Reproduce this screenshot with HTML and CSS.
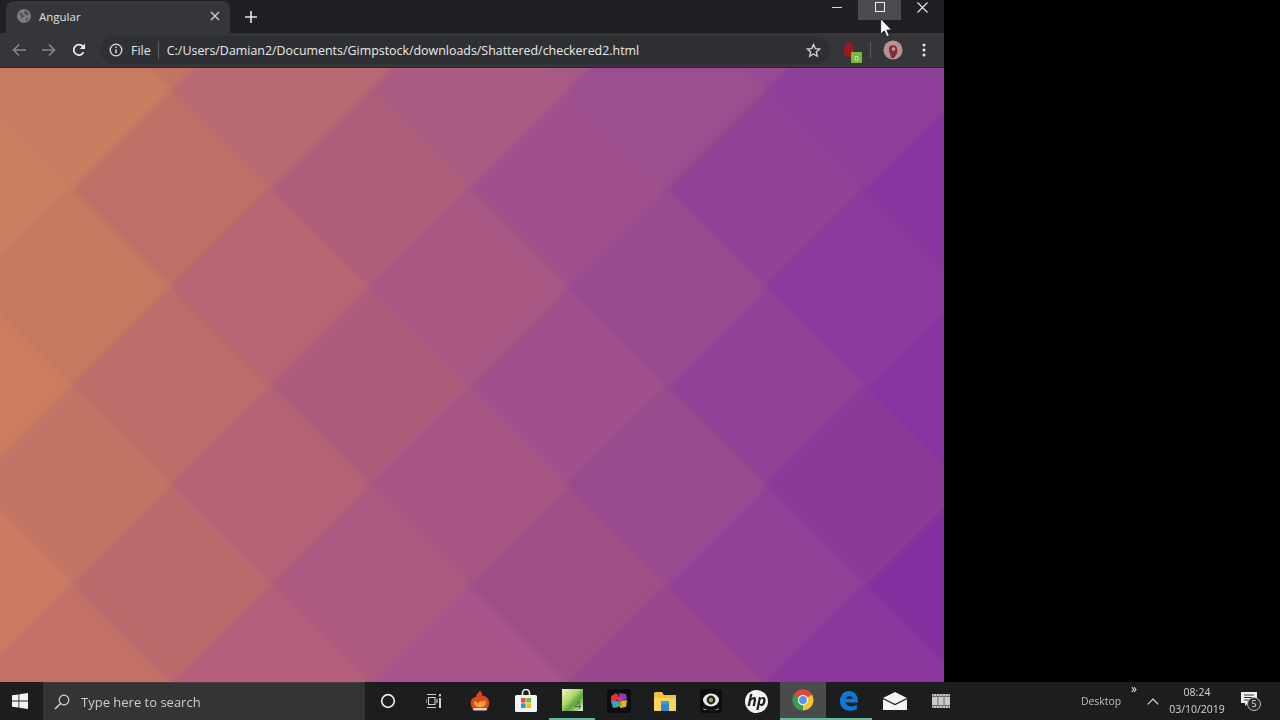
FILE: index.html
```html
<!DOCTYPE html>
<html lang="en">
<head>
    <meta charset="UTF-8">
    <meta name="viewport" content="width=device-width, initial-scale=1.0">
    <title>Angular</title>
    <link rel="stylesheet" href="styles.css">
</head>
<body>

    <div class="screen">
        <div class="window">
            <!-- tab strip -->
            <div class="tabstrip">
                <div class="tab">
                    <svg class="favicon" width="16" height="16" viewBox="0 0 16 16"><circle cx="8" cy="8" r="7" fill="#7b7d80"/><path d="M3 4l4 2 1 3-3 1zM9 2l4 3-2 3-3-2zM10 10l3 0-3 4z" fill="#55565a"/></svg>
                    <span class="tab-title">Angular</span>
                    <svg class="tab-close" width="10" height="10" viewBox="0 0 10 10"><path d="M1 1l8 8M9 1l-8 8" stroke="#c8cacc" stroke-width="1.5"/></svg>
                </div>
                <svg class="newtab" width="12" height="12" viewBox="0 0 12 12"><path d="M6 0v12M0 6h12" stroke="#e4e6e8" stroke-width="1.6"/></svg>
                <div class="winbtns">
                    <div class="winbtn"><svg width="10" height="10" viewBox="0 0 10 10"><path d="M0 5.5h10" stroke="#d8d8d8" stroke-width="1"/></svg></div>
                    <div class="winbtn winbtn-hover"><svg width="10" height="10" viewBox="0 0 10 10"><rect x=".5" y=".5" width="9" height="9" fill="none" stroke="#eee" stroke-width="1"/></svg></div>
                    <div class="winbtn"><svg width="11" height="11" viewBox="0 0 11 11"><path d="M.5.5l10 10M10.5.5l-10 10" stroke="#eee" stroke-width="1.1"/></svg></div>
                </div>
            </div>

            <!-- toolbar -->
            <div class="toolbar">
                <svg class="nav-icon" width="14" height="14" viewBox="0 0 14 14"><path d="M14 7H2M7 1.5L1.500 7 7 12.500" fill="none" stroke="#85888b" stroke-width="1.6"/></svg>
                <svg class="nav-icon" width="14" height="14" viewBox="0 0 14 14"><path d="M0 7h12M7 1.500L12.500 7 7 12.500" fill="none" stroke="#85888b" stroke-width="1.6"/></svg>
                <svg class="nav-icon" width="14" height="14" viewBox="0 0 14 14"><path d="M11.6 9.200A5.200 5.200 0 1 1 11 3.600" fill="none" stroke="#eceef0" stroke-width="1.700"/><path d="M13 .6V6H7.800z" fill="#eceef0"/></svg>
                <div class="omnibox">
                    <svg class="info" width="14" height="14" viewBox="0 0 14 14"><circle cx="7" cy="7" r="5.800" fill="none" stroke="#dfe1e3" stroke-width="1.300"/><path d="M7 6.200v4M7 3.600v1.500" stroke="#dfe1e3" stroke-width="1.400"/></svg>
                    <span class="scheme">File</span>
                    <span class="divider"></span>
                    <span class="url">C:/Users/Damian2/Documents/Gimpstock/downloads/Shattered/checkered2.html</span>
                    <svg class="star" width="15" height="15" viewBox="0 0 15 15"><path d="M7.500 1.600l1.800 4 4.300.4-3.300 2.900 1 4.300-3.800-2.300-3.800 2.300 1-4.300L1.400 6l4.300-.4z" fill="none" stroke="#d6d8da" stroke-width="1.300"/></svg>
                </div>
                <div class="extension">
                    <svg width="22" height="26" viewBox="0 0 22 26"><path d="M8 4c3 0 4 3 4 5 1 2 2 5 0 8-2 3-6 3-8 0-2-3-1-6 0-8 0-2 1-5 4-5z" fill="#9c1822"/><rect x="10" y="14" width="11" height="11" rx="1" fill="#7ab83e"/></svg>
                    <span class="badge">0</span>
                </div>
                <span class="divider divider-ext"></span>
                <svg class="avatar" width="20" height="20" viewBox="0 0 20 20"><circle cx="10" cy="10" r="9.500" fill="#bb9293"/><path d="M6 8c0-3 7-4 8 0 1 3 0 6-1 7l-2 3H8l-1-4c-1-2-1-4-1-6z" fill="#80303a"/><circle cx="10.500" cy="9" r="1.800" fill="#c9a09c"/></svg>
                <svg class="menu" width="4" height="14" viewBox="0 0 4 14"><circle cx="2" cy="2" r="1.500" fill="#e6e8ea"/><circle cx="2" cy="7" r="1.500" fill="#e6e8ea"/><circle cx="2" cy="12" r="1.500" fill="#e6e8ea"/></svg>
            </div>

            <!-- page: checkered diamonds -->
            <svg class="page" viewBox="0 68 944 614" preserveAspectRatio="none">
                <defs><path id="d" d="M0-100L100 0 0 100-100 0z"/></defs>
                <g class="cells">
                    <rect x="-20" y="40" width="990" height="660" fill="#a85a80"/>
                    <use href="#d" x="-26" y="-8" fill="#cc8260"/>
                    <use href="#d" x="172" y="-8" fill="#c47562"/>
                    <use href="#d" x="370" y="-8" fill="#b86a74"/>
                    <use href="#d" x="568" y="-8" fill="#a85a86"/>
                    <use href="#d" x="766" y="-8" fill="#9a4a94"/>
                    <use href="#d" x="964" y="-8" fill="#8e3e9c"/>

                    <use href="#d" x="72" y="91" fill="#c87c60"/>
                    <use href="#d" x="270" y="91" fill="#ba6a72"/>
                    <use href="#d" x="468" y="91" fill="#ab5c82"/>
                    <use href="#d" x="666" y="91" fill="#9c4e90"/>
                    <use href="#d" x="864" y="91" fill="#8f3f9a"/>

                    <use href="#d" x="-26" y="190" fill="#cc7f60"/>
                    <use href="#d" x="172" y="190" fill="#bf6e68"/>
                    <use href="#d" x="370" y="190" fill="#af5e7a"/>
                    <use href="#d" x="568" y="190" fill="#a0508a"/>
                    <use href="#d" x="766" y="190" fill="#924296"/>
                    <use href="#d" x="964" y="190" fill="#8634a0"/>

                    <use href="#d" x="72" y="287" fill="#c67860"/>
                    <use href="#d" x="270" y="287" fill="#b76572"/>
                    <use href="#d" x="468" y="287" fill="#a85882"/>
                    <use href="#d" x="666" y="287" fill="#994a90"/>
                    <use href="#d" x="864" y="287" fill="#8c3a9c"/>

                    <use href="#d" x="-26" y="388" fill="#cc7d60"/>
                    <use href="#d" x="172" y="388" fill="#bd6c6a"/>
                    <use href="#d" x="370" y="388" fill="#ae5c7c"/>
                    <use href="#d" x="568" y="388" fill="#a0508a"/>
                    <use href="#d" x="766" y="388" fill="#924296"/>
                    <use href="#d" x="964" y="388" fill="#8634a0"/>

                    <use href="#d" x="72" y="485" fill="#c47464"/>
                    <use href="#d" x="270" y="485" fill="#b66276"/>
                    <use href="#d" x="468" y="485" fill="#a75684"/>
                    <use href="#d" x="666" y="485" fill="#984a8e"/>
                    <use href="#d" x="864" y="485" fill="#8b3a9a"/>

                    <use href="#d" x="-26" y="586" fill="#ca7a62"/>
                    <use href="#d" x="172" y="586" fill="#bd6a6c"/>
                    <use href="#d" x="370" y="586" fill="#ae5a80"/>
                    <use href="#d" x="568" y="586" fill="#a04e88"/>
                    <use href="#d" x="766" y="586" fill="#924096"/>
                    <use href="#d" x="964" y="586" fill="#8530a0"/>

                    <use href="#d" x="72" y="684" fill="#c27068"/>
                    <use href="#d" x="270" y="684" fill="#b45e7a"/>
                    <use href="#d" x="468" y="684" fill="#a6548a"/>
                    <use href="#d" x="666" y="684" fill="#98468e"/>
                    <use href="#d" x="864" y="684" fill="#8a389c"/>
                </g>
            </svg>
        </div>
        <div class="blackout"></div>
    </div>

    <!-- taskbar -->
    <div class="taskbar">
        <div class="start">
            <svg width="16" height="16" viewBox="0 0 16 16"><path d="M0 2.300l6.500-.9v6.200H0zM7.300 1.300L16 0v7.600H7.300zM0 8.400h6.500v6.200L0 13.700zM7.300 8.400H16V16l-8.700-1.300z" fill="#f4f4f4"/></svg>
        </div>
        <div class="search">
            <svg width="16" height="16" viewBox="0 0 16 16"><circle cx="10" cy="6" r="4.800" fill="none" stroke="#d8d8d8" stroke-width="1.200"/><path d="M6.500 9.500L1 15" stroke="#d8d8d8" stroke-width="1.400"/></svg>
            <span class="search-text">Type here to search</span>
        </div>
        <div class="apps">
            <div class="app"><svg width="16" height="16" viewBox="0 0 16 16"><circle cx="8" cy="8" r="6.300" fill="none" stroke="#e8e8e8" stroke-width="1.700"/></svg></div>
            <div class="app"><svg width="16" height="14" viewBox="0 0 16 14"><path d="M1 .5h9M1 13.500h9M2.500 3.500h6.500v7h-6.500zM0 5v4M11 5v4" fill="none" stroke="#cfcfcf" stroke-width="1.100"/><rect x="13" y="0" width="2" height="2.400" fill="#cfcfcf"/><rect x="13" y="4" width="2" height="10" fill="#cfcfcf"/></svg></div>
            <div class="app"><svg width="20" height="22" viewBox="0 0 20 22"><path d="M10 0c1 3 3 3 2 6 3-1 6 2 7 5 1 4-1 8-4 9H5c-3-1-5-5-4-9 1-3 3-4 5-4C6 4 9 3 10 0z" fill="#d9481c"/><path d="M4 12c2-2 3 0 4 2 1-3 3-4 4-2 1-1 3-2 4 0 0 3-2 5-6 5s-6-2-6-5z" fill="#f3a23a"/><rect x="3" y="18" width="14" height="2.400" rx="1" fill="#e6cfc0"/></svg></div>
            <div class="app"><svg width="22" height="24" viewBox="0 0 22 24"><path d="M7.500 7V4a3.500 3.500 0 0 1 7 0v3" fill="none" stroke="#f2f2f2" stroke-width="1.600"/><rect x="0" y="6" width="22" height="17" rx="1.500" fill="#f4f4f4"/><rect x="6" y="9" width="4.600" height="4.600" fill="#e8532a"/><rect x="11.400" y="9" width="4.600" height="4.600" fill="#78b82a"/><rect x="6" y="14.400" width="4.600" height="4.600" fill="#1f9fe0"/><rect x="11.400" y="14.400" width="4.600" height="4.600" fill="#f7b916"/></svg></div>
            <div class="app app-open"><div class="sheet"><span class="sheet-num">4</span></div></div>
            <div class="app"><svg width="24" height="24" viewBox="0 0 24 24"><rect width="24" height="24" rx="3" fill="#0d0d10"/><path d="M4 7l5-3 3 3-3 5-5 0z" fill="#e0352d"/><path d="M12 4l7 1 1 5-7 2z" fill="#8a3bb8"/><path d="M4 12h7l1 6-6 1z" fill="#2f9ed8"/><path d="M12 12l8-1-1 7-6 1z" fill="#e8b21e"/><path d="M9 9l5-2 2 4-4 3z" fill="#d6308a"/><path d="M8 14l6-1 1 3-5 2z" fill="#4cb848"/></svg></div>
            <div class="app"><svg width="22" height="19" viewBox="0 0 22 19"><path d="M0 1.500A1.500 1.500 0 0 1 1.500 0H8l2 3h12v15a1 1 0 0 1-1 1H1a1 1 0 0 1-1-1z" fill="#f0c040"/><rect x="0" y="6" width="22" height="13" rx="1" fill="#fad55c"/><rect x="7" y="9" width="8" height="3" fill="#3a9bdc"/><rect x="7" y="12" width="8" height="7" fill="#2f86c8"/></svg></div>
            <div class="app"><svg width="22" height="24" viewBox="0 0 22 24"><rect width="22" height="24" rx="3" fill="#0e0e0e"/><ellipse cx="11" cy="11" rx="8" ry="6.500" fill="#e8e8e8"/><circle cx="11" cy="11" r="4.400" fill="#222"/><circle cx="11" cy="11" r="2.200" fill="#8fae3a"/><path d="M3 19c5 3 11 3 16 0l-1 2H4z" fill="#a8c040"/></svg></div>
            <div class="app"><div class="hp">hp</div></div>
            <div class="app app-active"><svg width="22" height="22" viewBox="0 0 22 22"><circle cx="11" cy="11" r="10.500" fill="#dd4b3d"/><path d="M11 11L20.100 5.800A10.500 10.500 0 0 1 11 21.500z" fill="#f5c531"/><path d="M11 11L11 21.500A10.500 10.500 0 0 1 1.900 5.800z" fill="#2ea24d"/><path d="M1.900 5.800A10.500 10.500 0 0 1 20.100 5.800H11z" fill="#dd4b3d"/><circle cx="11" cy="11" r="5.200" fill="#f2f2f2"/><circle cx="11" cy="11" r="3.900" fill="#5f8fe8"/></svg></div>
            <div class="app app-open"><svg width="20" height="21" viewBox="0 0 20 21"><path d="M1 11C1 5 5 1 10 1s9 4 9 10v1.500H6.800c.2 3.500 5.500 5.500 11 2.300v4.500c-6.500 3-16.800 1.500-16.800-8.300zM6.800 8.800h7C13.600 5.500 7.500 5.500 6.800 8.800z" fill="#0f78d4" fill-rule="evenodd"/></svg></div>
            <div class="app"><svg width="24" height="18" viewBox="0 0 24 18"><path d="M0 6L12 0l12 6v12H0z" fill="#f4f4f4"/><path d="M0 6.500L12 12.500 24 6.500" fill="none" stroke="#1f2022" stroke-width="1.200"/></svg></div>
            <div class="app"><svg width="18" height="14" viewBox="0 0 18 14"><rect width="18" height="14" fill="#c9c9c9"/><path d="M0 2.500h18M0 11.500h18M6 2.500v9M12 2.500v9" stroke="#6c6c6c" stroke-width="1"/><path d="M1 1h1M4 1h1M7 1h1M10 1h1M13 1h1M16 1h1M1 13h1M4 13h1M7 13h1M10 13h1M13 13h1M16 13h1" stroke="#333" stroke-width="1"/></svg></div>
        </div>
        <div class="tray">
            <span class="tray-desktop">Desktop</span>
            <span class="tray-more">&raquo;</span>
            <svg class="tray-up" width="12" height="7" viewBox="0 0 12 7"><path d="M.7 6.300L6 1l5.300 5.300" fill="none" stroke="#dcdcdc" stroke-width="1.200"/></svg>
            <div class="clock">
                <span>08:24</span>
                <span>03/10/2019</span>
            </div>
            <div class="notify">
                <svg width="16" height="15" viewBox="0 0 16 15"><path d="M0 0h16v11H7l-3 3v-3H0z" fill="#efefef"/><path d="M3 3h10M3 5.500h10M3 8h7" stroke="#333" stroke-width="1"/></svg>
                <span class="notify-count">5</span>
            </div>
        </div>
    </div>

    <!-- mouse pointer -->
    <svg class="cursor" width="12" height="20" viewBox="0 0 12 20"><path d="M.7.7v15.500l3.600-3.400 2.500 6 2.500-1-2.500-5.800h4.800z" fill="#fff" stroke="#111" stroke-width=".8"/></svg>

</body>
</html>
```

FILE: styles.css
```css
* {
box-sizing: border-box;
}

body {
font-family: 'Open Sans', 'Liberation Sans', sans-serif;
background-color: #000;
margin: 0;
padding: 0;
width: 1280px;
height: 720px;
overflow: hidden;
position: relative;
}

.screen {
display: flex;
height: 682px;
}

.window {
width: 944px;
display: flex;
flex-direction: column;
}

.blackout {
flex: 1;
background-color: #000;
}

/* tab strip */

.tabstrip {
height: 33px;
background-color: #1f2023;
display: flex;
align-items: flex-start;
padding-left: 6px;
}

.tab {
width: 224px;
height: 32px;
margin-top: 1px;
background-color: #35363a;
border-radius: 8px 8px 0 0;
display: flex;
align-items: center;
padding: 0 10px 2px 10px;
}

.favicon {
flex: none;
}

.tab-title {
margin-left: 7px;
flex: 1;
font-size: 11.5px;
color: #dfe1e4;
}

.newtab {
margin: 11px 0 0 15px;
}

.winbtns {
display: flex;
margin-left: auto;
}

.winbtn {
width: 43px;
height: 20px;
display: flex;
align-items: center;
justify-content: center;
padding-bottom: 6px;
}

.winbtn-hover {
background-color: #4b4c4f;
}

/* toolbar */

.toolbar {
height: 35px;
background-color: #35363a;
border-bottom: 1px solid #26272a;
display: flex;
align-items: center;
padding-left: 12px;
}

.nav-icon {
flex: none;
margin-right: 16px;
}

.omnibox {
width: 730px;
height: 28px;
margin-left: -2px;
background-color: #2f3033;
border-radius: 14px;
display: flex;
align-items: center;
padding-left: 9px;
}

.info {
flex: none;
}

.scheme {
margin-left: 8px;
font-size: 12.5px;
color: #e3e5e8;
}

.divider {
width: 1px;
height: 18px;
background-color: #5c5e61;
margin: 0 8px 0 7px;
}

.url {
font-size: 12.42px;
color: #e8eaed;
white-space: nowrap;
}

.star {
margin-left: auto;
margin-right: 9px;
}

.extension {
position: relative;
width: 22px;
height: 26px;
margin-left: 11px;
margin-top: 2px;
}

.badge {
position: absolute;
left: 10px;
top: 14px;
width: 11px;
height: 11px;
font-size: 8px;
line-height: 11px;
text-align: center;
color: #eef5e4;
}

.divider-ext {
height: 16px;
margin: 0 0 0 7px;
}

.avatar {
margin-left: 12px;
}

.menu {
margin-left: 19px;
}

/* page */

.page {
display: block;
width: 944px;
height: 614px;
}

.cells {
filter: blur(2.5px);
}

/* taskbar */

.taskbar {
height: 38px;
background-color: #1c1d1f;
display: flex;
align-items: stretch;
}

.start {
width: 43px;
padding-right: 3px;
display: flex;
align-items: center;
justify-content: center;
}

.search {
width: 322px;
background-color: #333436;
border-top: 1px solid #3f4042;
display: flex;
align-items: center;
padding-left: 11px;
}

.search-text {
margin-left: 11px;
font-size: 13px;
color: #cfcfcf;
}

.apps {
display: flex;
}

.app {
width: 46.1px;
display: flex;
align-items: center;
justify-content: center;
}

.app-open {
border-bottom: 2px solid #62b89c;
}

.app-active {
background-color: #4a4b4c;
border-bottom: 2px solid #62b89c;
}

.sheet {
width: 21px;
height: 22px;
background: linear-gradient(135deg, #eef3c8 0%, #b6d86a 40%, #5aa83c 62%, #e4efd0 100%);
display: flex;
align-items: flex-end;
justify-content: flex-end;
padding-right: 2px;
}

.sheet-num {
font-size: 11px;
line-height: 12px;
color: #3c6a30;
}

.hp {
width: 23px;
height: 23px;
border-radius: 50%;
background-color: #f4f4f4;
color: #1c1d1f;
font-size: 16px;
font-style: italic;
font-weight: 700;
line-height: 21px;
text-align: center;
}

/* tray */

.tray {
margin-left: auto;
position: relative;
display: flex;
align-items: center;
}

.tray-desktop {
font-size: 10.4px;
color: #bdbdbd;
}

.tray-more {
position: absolute;
left: 50px;
top: 0;
font-size: 12px;
line-height: 14px;
color: #f0f0f0;
}

.tray-up {
margin-left: 26px;
}

.clock {
width: 56px;
margin-left: 10px;
display: flex;
flex-direction: column;
align-items: center;
gap: 2px;
font-size: 10.5px;
line-height: 15px;
color: #d6d6d6;
white-space: nowrap;
}

.notify {
position: relative;
width: 16px;
height: 22px;
margin: 0 23px 0 16px;
}

.notify-count {
position: absolute;
left: 6px;
top: 7px;
width: 14px;
height: 14px;
border: 1px solid #bdbdbd;
border-radius: 50%;
background-color: #2a2a2c;
color: #e8e8e8;
font-size: 9px;
line-height: 12px;
text-align: center;
}

/* pointer sits over everything */

.cursor {
position: absolute;
left: 880px;
top: 18px;
}
```
